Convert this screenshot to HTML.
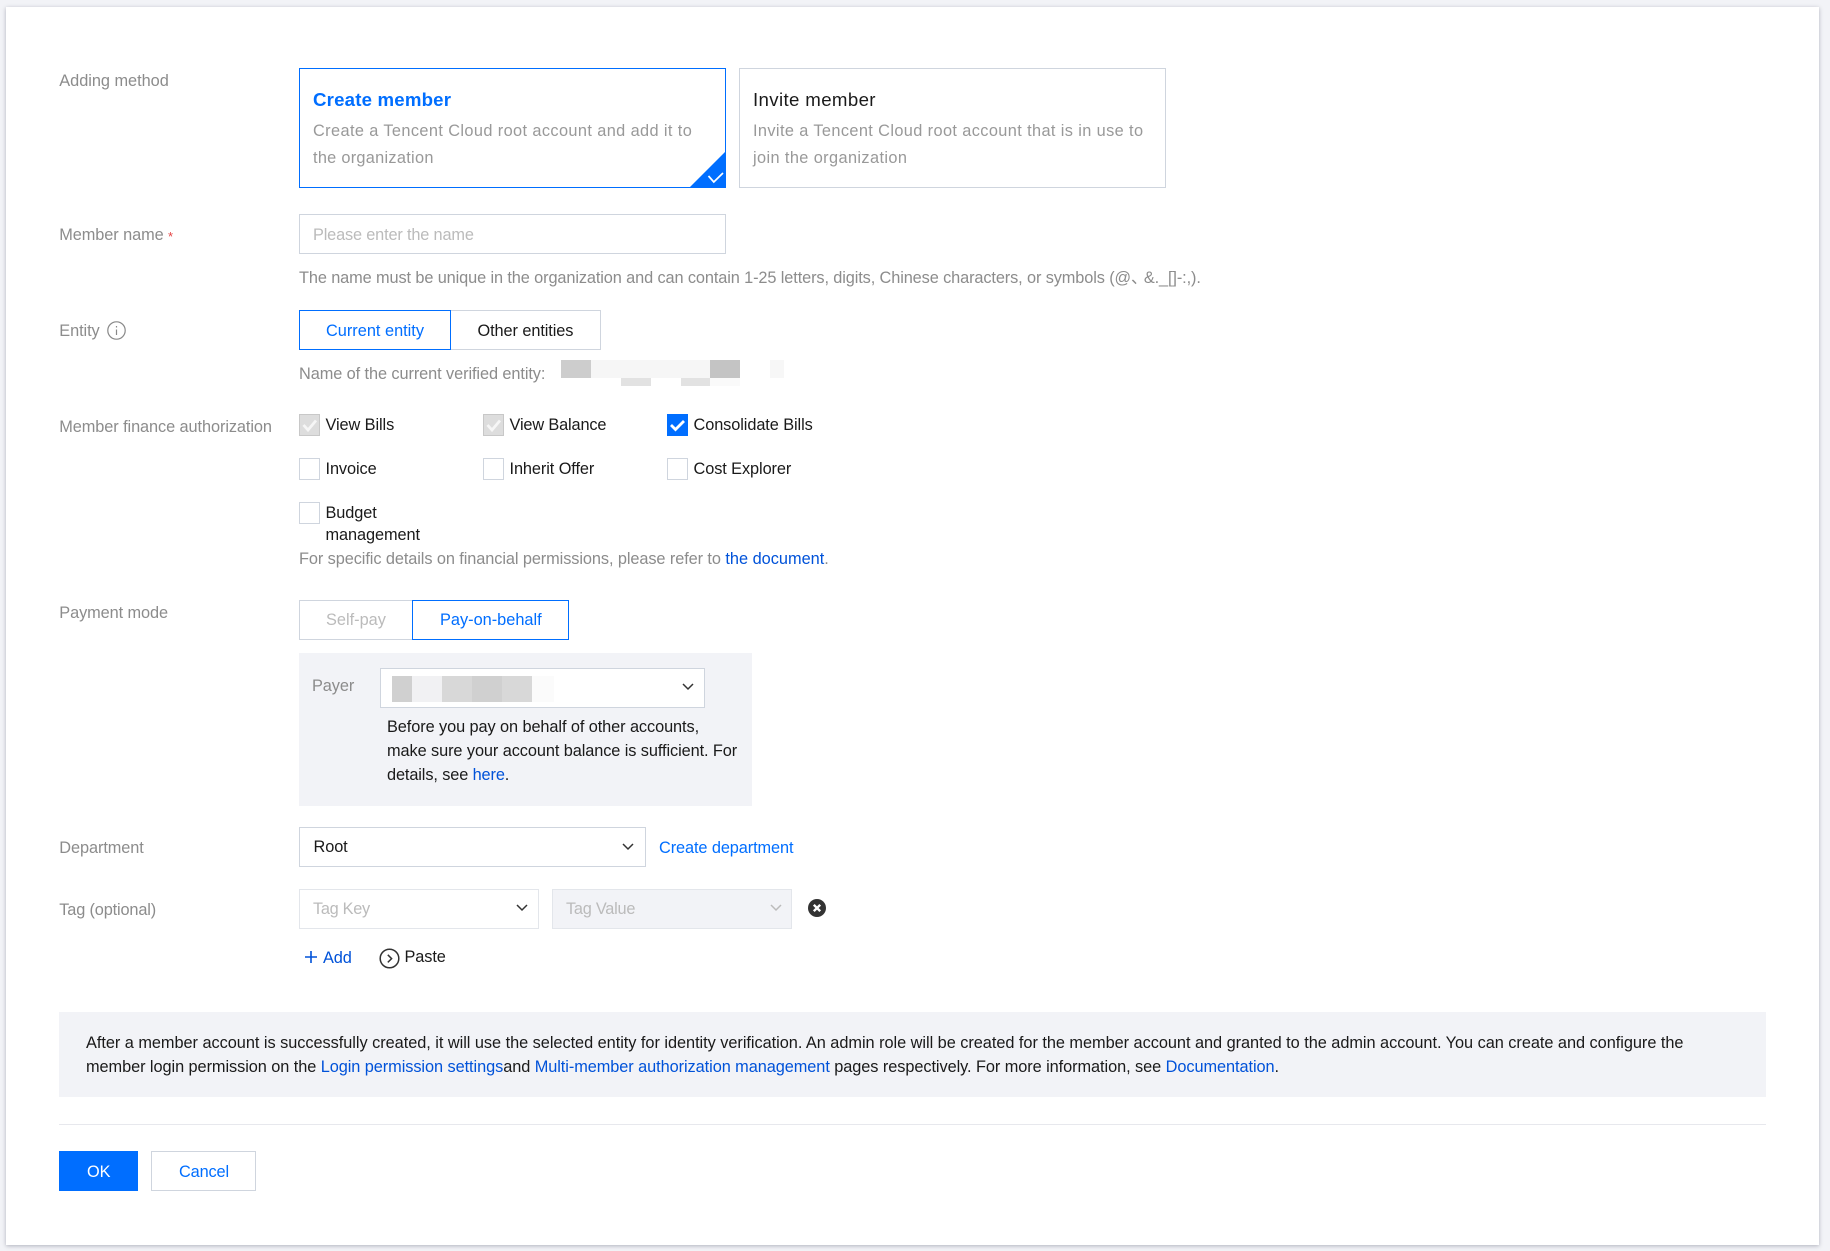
<!DOCTYPE html>
<html><head><meta charset="utf-8"><style>
html,body{margin:0;padding:0;width:1830px;height:1251px;overflow:hidden;background:#f2f3f7}
body{font-family:"Liberation Sans","Noto Sans CJK SC",sans-serif;font-size:16.33px;color:#1a1a1a;position:relative;letter-spacing:-.09px}
#p{position:absolute;left:6px;top:7px;width:1813px;height:1238px;background:#fff;box-shadow:0 1px 4px rgba(54,58,80,.35)}
.t,.b,svg{position:absolute}
.t{white-space:nowrap;line-height:24px;height:24px;margin-top:1.100px}
.b{box-sizing:border-box;border:1px solid #cfd5de;background:#fff}
.l{color:#8c8c8c;left:59.300px}
.g{color:#8c8c8c}
.a{color:#006eff;letter-spacing:0}
.k{color:#0052d9}
.bl{border:1px solid #006eff}
.cb{position:absolute;box-sizing:border-box;width:21px;height:22px;border:1px solid #cfd5de;background:#fff}
.cd{color:#999;letter-spacing:.39px}
</style></head><body>
<div id="p"></div>

<div class="t l" style="top:68px;letter-spacing:-.03px">Adding method</div>
<div class="b" style="left:299px;top:68px;width:427px;height:120px;border-color:#006eff"></div>
<svg style="left:689px;top:151px" width="37" height="37"><path d="M0 37L37 0V37Z" fill="#006eff"/><path d="M19.500 25l5.300 6L34 22" fill="none" stroke="#fff" stroke-width="1.700"/></svg>
<div class="t a" style="left:313px;top:87px;font-size:18.670px;font-weight:700;letter-spacing:.18px">Create member</div>
<div class="t cd" style="left:313px;top:118px">Create a Tencent Cloud root account and add it to</div>
<div class="t cd" style="left:313px;top:145px;letter-spacing:.28px">the organization</div>
<div class="b" style="left:739px;top:68px;width:427px;height:120px"></div>
<div class="t" style="left:753px;top:87px;font-size:18.670px;letter-spacing:.36px">Invite member</div>
<div class="t cd" style="left:753px;top:118px;letter-spacing:.385px">Invite a Tencent Cloud root account that is in use to</div>
<div class="t cd" style="left:753px;top:145px">join the organization</div>

<div class="t l" style="top:222px">Member name</div>
<div class="t" style="left:168px;top:224px;color:#e54545;font-size:13px">*</div>
<div class="b" style="left:299px;top:214px;width:427px;height:40px"></div>
<div class="t" style="left:313px;top:222px;color:#bbb;letter-spacing:-.17px">Please enter the name</div>
<div class="t g" style="left:299px;top:265px;letter-spacing:-.115px">The name must be unique in the organization and can contain 1-25 letters, digits, Chinese characters, or symbols (@<span style="letter-spacing:-3.500px">、</span>&amp;._[]-:,).</div>

<div class="t l" style="top:318px">Entity</div>
<svg style="left:107px;top:320.500px" width="19" height="19" fill="none" stroke="#888" stroke-width="1.200"><circle cx="9.500" cy="9.500" r="8.700"/><path d="M9.500 8.500v5.500M9.500 5v1.500"/></svg>
<div class="b" style="left:450px;top:310px;width:151px;height:40px"></div>
<div class="b bl" style="left:299px;top:310px;width:152px;height:40px"></div>
<div class="t a" style="left:326px;top:318px">Current entity</div>
<div class="t" style="left:477.500px;top:318px">Other entities</div>
<div class="t g" style="left:299px;top:361px">Name of the current verified entity:</div>
<svg style="left:561px;top:360px" width="224" height="27" shape-rendering="crispEdges"><rect width="30" height="18" fill="#cdcdcd"/><rect x="30" width="120" height="18" fill="#f6f6f6"/><rect x="149" width="30" height="18" fill="#c4c4c4"/><rect x="209" width="14" height="18" fill="#f7f7f7"/><rect x="60" y="18" width="30" height="8" fill="#e2e2e2"/><rect x="120" y="18" width="29" height="8" fill="#e2e2e2"/><rect x="149" y="18" width="30" height="8" fill="#fafafa"/></svg>

<div class="t l" style="top:414px">Member finance authorization</div>
<div class="cb" style="left:299px;top:414px;background:#ddd;border-color:#c8c8c8"></div>
<svg style="left:299px;top:414px" width="21" height="22" fill="none" stroke="#f6f6f6" stroke-width="2.800"><path d="M4.500 11l4.500 5L17 6.500"/></svg>
<div class="t" style="left:325.500px;top:412px">View Bills</div>
<div class="cb" style="left:483px;top:414px;background:#ddd;border-color:#c8c8c8"></div>
<svg style="left:483px;top:414px" width="21" height="22" fill="none" stroke="#f6f6f6" stroke-width="2.800"><path d="M4.500 11l4.500 5L17 6.500"/></svg>
<div class="t" style="left:509.500px;top:412px;letter-spacing:-.15px">View Balance</div>
<div class="cb" style="left:667px;top:414px;background:#006eff;border-color:#006eff"></div>
<svg style="left:667px;top:414px" width="21" height="22" fill="none" stroke="#fff" stroke-width="2.800"><path d="M4 11l4.500 4.500L17 7"/></svg>
<div class="t" style="left:693.500px;top:412px">Consolidate Bills</div>
<div class="cb" style="left:299px;top:458px"></div>
<div class="t" style="left:325.500px;top:456px">Invoice</div>
<div class="cb" style="left:483px;top:458px"></div>
<div class="t" style="left:509.500px;top:456px">Inherit Offer</div>
<div class="cb" style="left:667px;top:458px"></div>
<div class="t" style="left:693.500px;top:456px">Cost Explorer</div>
<div class="cb" style="left:299px;top:502px"></div>
<div class="t" style="left:325.500px;top:500px">Budget</div>
<div class="t" style="left:325.500px;top:522px">management</div>
<div class="t g" style="left:299px;top:546px">For specific details on financial permissions, please refer to <span class="k" style="letter-spacing:0">the document</span>.</div>

<div class="t l" style="top:600px">Payment mode</div>
<div class="b" style="left:299px;top:600px;width:115px;height:40px"></div>
<div class="b bl" style="left:412px;top:600px;width:157px;height:40px"></div>
<div class="t" style="left:326px;top:607px;color:#bbb;letter-spacing:0">Self-pay</div>
<div class="t a" style="left:440px;top:607px">Pay-on-behalf</div>
<div style="position:absolute;left:299px;top:653px;width:453px;height:153px;background:#f2f3f7"></div>
<div class="t g" style="left:312px;top:673px">Payer</div>
<div class="b" style="left:380px;top:668px;width:325px;height:40px"></div>
<svg style="left:392px;top:676px" width="162" height="26" shape-rendering="crispEdges"><rect width="20" height="26" fill="#d0d0d0"/><rect x="20" width="30" height="26" fill="#f1f1f3"/><rect x="50" width="30" height="26" fill="#d8d8d8"/><rect x="80" width="30" height="26" fill="#d0d0d0"/><rect x="110" width="30" height="26" fill="#d8d8d8"/><rect x="140" width="22" height="26" fill="#fbfbfb"/></svg>
<svg style="left:682px;top:682px" width="12" height="10" fill="none" stroke="#333" stroke-width="1.500"><path d="M1 2l5 5 5-5"/></svg>
<div class="t" style="left:387px;top:714px">Before you pay on behalf of other accounts,</div>
<div class="t" style="left:387px;top:738px">make sure your account balance is sufficient. For</div>
<div class="t" style="left:387px;top:762px;letter-spacing:-.12px">details, see <span class="k">here</span>.</div>

<div class="t l" style="top:835px">Department</div>
<div class="b" style="left:299px;top:827px;width:347px;height:40px"></div>
<div class="t" style="left:313.500px;top:834px">Root</div>
<svg style="left:622px;top:842px" width="12" height="10" fill="none" stroke="#333" stroke-width="1.500"><path d="M1 2l5 5 5-5"/></svg>
<div class="t a" style="left:659px;top:835px;letter-spacing:-.1px">Create department</div>

<div class="t l" style="top:897px;letter-spacing:-.16px">Tag (optional)</div>
<div class="b" style="left:299px;top:889px;width:240px;height:40px;border-color:#e3e6eb"></div>
<div class="t" style="left:313px;top:896px;color:#bbb;letter-spacing:-.3px">Tag Key</div>
<svg style="left:516px;top:903px" width="12" height="10" fill="none" stroke="#333" stroke-width="1.500"><path d="M1 2l5 5 5-5"/></svg>
<div class="b" style="left:552px;top:889px;width:240px;height:40px;background:#f2f3f7;border-color:#e3e6eb"></div>
<div class="t" style="left:566px;top:896px;color:#bbb;letter-spacing:-.25px">Tag Value</div>
<svg style="left:770px;top:903px" width="12" height="10" fill="none" stroke="#bbb" stroke-width="1.500"><path d="M1 2l5 5 5-5"/></svg>
<svg style="left:808px;top:899px" width="18" height="18"><circle cx="9" cy="9" r="9" fill="#333"/><path d="M5.800 5.800l6.400 6.400M12.200 5.800l-6.400 6.400" stroke="#fff" stroke-width="2.400"/></svg>
<svg style="left:304px;top:950px" width="14" height="14" stroke="#0052d9" stroke-width="1.600"><path d="M7 1v12M1 7h12"/></svg>
<div class="t k" style="left:323px;top:945px">Add</div>
<svg style="left:379px;top:948px" width="21" height="21" fill="none" stroke="#333" stroke-width="1.500"><circle cx="10.500" cy="10.500" r="9.300"/><path d="M8.800 6.800l3.800 3.800-3.800 3.800"/></svg>
<div class="t" style="left:404.500px;top:944px">Paste</div>

<div style="position:absolute;left:59px;top:1012px;width:1707px;height:85px;background:#f2f3f7"></div>
<div class="t" style="left:86px;top:1030px;letter-spacing:-.04px">After a member account is successfully created, it will use the selected entity for identity verification. An admin role will be created for the member account and granted to the admin account. You can create and configure the</div>
<div class="t" style="left:86px;top:1054px;letter-spacing:-.07px">member login permission on the <span class="k">Login permission settings</span>and <span class="k">Multi-member authorization management</span> pages respectively. For more information, see <span class="k">Documentation</span>.</div>
<div style="position:absolute;left:59px;top:1124px;width:1707px;height:1px;background:#e7e8ed"></div>
<div style="position:absolute;left:59px;top:1151px;width:79px;height:40px;background:#006eff"></div>
<div class="t" style="left:87px;top:1159px;color:#fff">OK</div>
<div class="b" style="left:151px;top:1151px;width:105px;height:40px"></div>
<div class="t a" style="left:179px;top:1159px;letter-spacing:-.15px">Cancel</div>
</body></html>
